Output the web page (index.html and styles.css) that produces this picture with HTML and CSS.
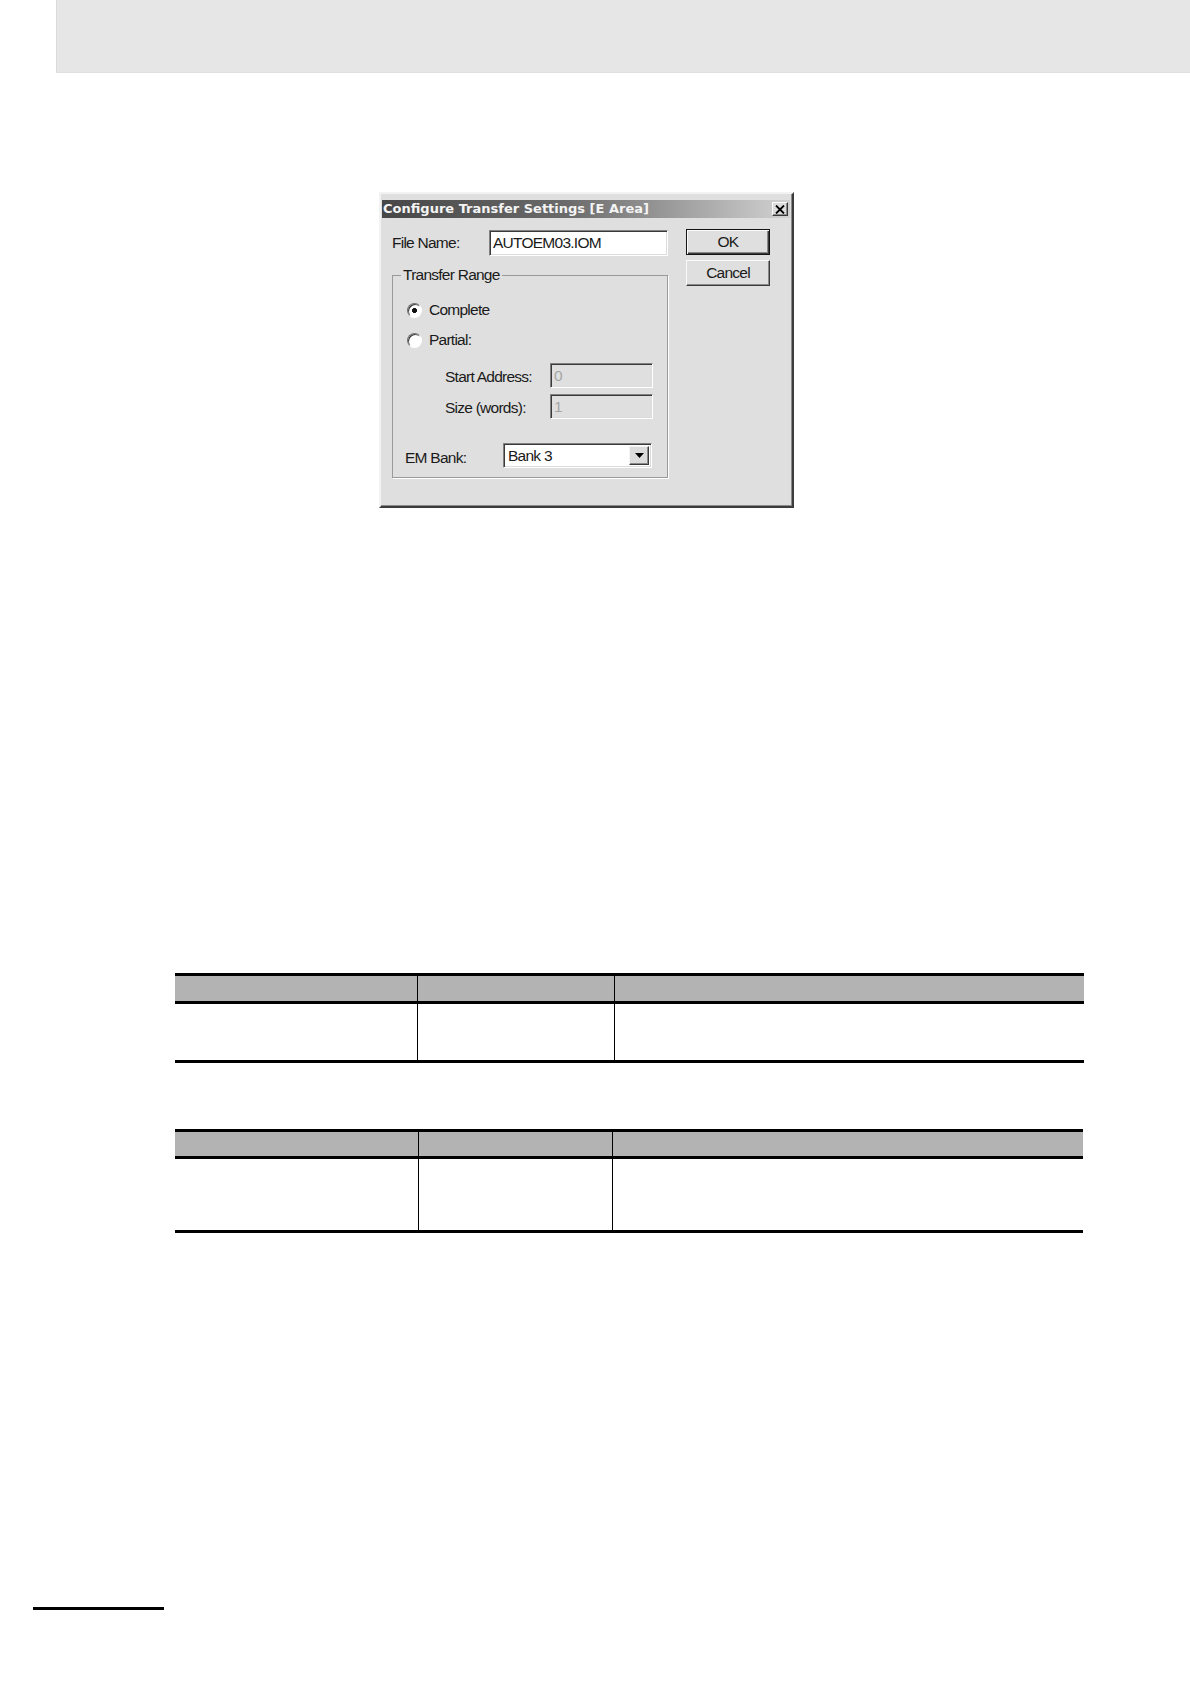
FILE: index.html
```html
<!DOCTYPE html>
<html>
<head>
<meta charset="utf-8">
<title>Configure Transfer Settings</title>
<link rel="stylesheet" href="styles.css">
</head>
<body>
<div class="topband"></div>

<div class="dialog-wrap">
  <div class="dialog">
    <div class="titlebar">
      <span class="title">Configure Transfer Settings [E Area]</span>
      <span class="close"><svg width="10" height="9" viewBox="0 0 10 9"><path d="M1 0.5 L9 8.5 M9 0.5 L1 8.5" stroke="#000" stroke-width="1.8" fill="none"/></svg></span>
    </div>
    <div class="dlg-body">
      <div class="left">
        <div class="file-row">
          <span class="file-lbl">File Name:</span>
          <div class="field white file-field">AUTOEM03.IOM</div>
        </div>
        <fieldset class="group">
          <legend>Transfer Range</legend>
          <div class="radio-row r1"><span class="radio checked"></span><span>Complete</span></div>
          <div class="radio-row r2"><span class="radio"></span><span>Partial:</span></div>
          <div class="sub-row s1"><span class="sub-lbl">Start Address:</span><div class="field disabled">0</div></div>
          <div class="sub-row s2"><span class="sub-lbl">Size (words):</span><div class="field disabled">1</div></div>
          <div class="bank-row">
            <span class="bank-lbl">EM Bank:</span>
            <div class="combo">
              <span class="combo-text">Bank 3</span>
              <span class="combo-btn"><svg width="9" height="5" viewBox="0 0 9 5"><path d="M0 0 L9 0 L4.5 5 Z" fill="#000"/></svg></span>
            </div>
          </div>
        </fieldset>
      </div>
      <div class="right">
        <div class="btn default">OK</div>
        <div class="btn cancel">Cancel</div>
      </div>
    </div>
  </div>
</div>

<div class="tbl t1">
  <div class="trow head"><div class="cell"></div><div class="cell"></div><div class="cell"></div></div>
  <div class="trow body"><div class="cell"></div><div class="cell"></div><div class="cell"></div></div>
</div>

<div class="tbl t2">
  <div class="trow head"><div class="cell"></div><div class="cell"></div><div class="cell"></div></div>
  <div class="trow body"><div class="cell"></div><div class="cell"></div><div class="cell"></div></div>
</div>

<div class="footline"></div>
</body>
</html>
```

FILE: styles.css
```css
* { box-sizing: border-box; }
html, body { margin: 0; padding: 0; background: #fff; }

.topband {
  margin-left: 56px;
  height: 73px;
  background: #e6e6e6;
  border-left: 1px solid #dadada;
  border-bottom: 1px solid #e0e0e0;
}

.dialog-wrap {
  padding-top: 119px;
  padding-left: 379px;
}

.dialog {
  width: 415px;
  height: 316px;
  background: #dfdfdf;
  border-style: solid;
  border-width: 2px;
  border-color: #f2f2f2 #3c3c3c #3c3c3c #f2f2f2;
  box-shadow: inset -1px -1px 0 #8a8a8a;
  padding: 6px 2px 0 1px;
  font-family: "Liberation Sans", Arial, sans-serif;
  font-size: 15.5px;
  letter-spacing: -0.75px;
  color: #1a1a1a;
}

.titlebar {
  height: 18px;
  display: flex;
  align-items: center;
  justify-content: space-between;
  background: linear-gradient(to right, #474747 0%, #6a6a6a 45%, #d2d2d2 100%);
  padding-left: 1px;
  padding-right: 2px;
}

.title {
  font-family: "DejaVu Sans", Verdana, sans-serif;
  font-weight: bold;
  font-size: 13px;
  letter-spacing: 0;
  color: #f4f4f4;
  line-height: 18px;
  white-space: nowrap;
}

.close {
  width: 16px;
  height: 14px;
  background: #dcdcdc;
  border-style: solid;
  border-width: 1px;
  border-color: #fafafa #3a3a3a #3a3a3a #fafafa;
  box-shadow: inset -1px -1px 0 #8a8a8a;
  display: flex;
  align-items: center;
  justify-content: center;
}

.dlg-body {
  display: flex;
  padding: 10px 0 0 10px;
  gap: 18px;
}

.left {
  width: 276px;
  display: flex;
  flex-direction: column;
}

.file-row {
  display: flex;
  align-items: center;
  height: 27px;
  margin-top: 1px;
}

.file-lbl {
  width: 97px;
}

.field {
  height: 100%;
  border-style: solid;
  border-width: 1px;
  border-color: #808080 #ffffff #ffffff #808080;
  box-shadow: inset 1px 1px 0 #3a3a3a, inset -1px -1px 0 #dcdcdc;
  display: flex;
  align-items: center;
  padding-left: 3px;
  white-space: nowrap;
}

.field.white {
  background: #fff;
}

.file-field {
  width: 179px;
  height: 26px;
}

.field.disabled {
  width: 103px;
  height: 25px;
  background: #dfdfdf;
  color: #a6a6a6;
  padding-left: 3px;
}

.group {
  margin: 10px 0 0 0;
  padding: 0 0 9px 8px;
  width: 276px;
  border: 1px solid #9a9a9a;
  box-shadow: 1px 1px 0 #ffffff;
  min-inline-size: 0;
}

.group legend {
  padding: 0 2px;
  line-height: 18px;
}

.radio-row {
  display: flex;
  align-items: center;
  height: 20px;
  margin-left: 6px;
  gap: 7px;
}

.r1 { margin-top: 16px; }
.r2 { margin-top: 10px; }

.radio {
  width: 15px;
  height: 15px;
  border-radius: 50%;
  border-style: solid;
  border-width: 1px;
  border-color: #707070 #ffffff #ffffff #707070;
  background: #fff;
  box-shadow: inset 1px 1px 0 #3a3a3a;
}

.radio.checked {
  background: radial-gradient(circle at 50% 50%, #111 0, #111 2.2px, #fff 2.8px);
}

.sub-row {
  display: flex;
  align-items: center;
  height: 25px;
  margin-left: 44px;
}

.s1 { margin-top: 13px; }
.s2 { margin-top: 6px; }

.sub-lbl {
  width: 105px;
  white-space: nowrap;
  padding-top: 2px;
}

.bank-row {
  display: flex;
  align-items: center;
  height: 25px;
  margin-top: 24px;
  margin-left: 4px;
}

.bank-lbl {
  width: 98px;
  padding-top: 5px;
}

.combo {
  width: 149px;
  height: 25px;
  background: #fff;
  border-style: solid;
  border-width: 1px;
  border-color: #808080 #ffffff #ffffff #808080;
  box-shadow: inset 1px 1px 0 #3a3a3a, inset -1px -1px 0 #dcdcdc;
  display: flex;
  align-items: center;
  justify-content: space-between;
  padding: 2px 2px 2px 4px;
}

.combo-btn {
  width: 20px;
  height: 100%;
  background: #dcdcdc;
  border-style: solid;
  border-width: 1px;
  border-color: #f4f4f4 #3a3a3a #3a3a3a #f4f4f4;
  box-shadow: inset -1px -1px 0 #8a8a8a;
  display: flex;
  align-items: center;
  justify-content: center;
}

.right {
  display: flex;
  flex-direction: column;
  gap: 5px;
  padding-top: 1px;
}

.btn {
  width: 84px;
  height: 26px;
  display: flex;
  align-items: center;
  justify-content: center;
  background: #dfdfdf;
  border-style: solid;
  border-width: 1px;
  border-color: #fafafa #3a3a3a #3a3a3a #fafafa;
  box-shadow: inset -1px -1px 0 #8a8a8a;
}

.btn.default {
  border: 1px solid #141414;
  box-shadow: inset 1px 1px 0 #fafafa, inset -1px -1px 0 #3a3a3a, inset -2px -2px 0 #8a8a8a;
}

.tbl {
  margin-left: 175px;
  border-top: 3px solid #000;
  border-bottom: 3px solid #000;
}

.trow {
  display: grid;
}

.trow .cell + .cell {
  border-left: 1px solid #000;
}

.head {
  background: #b3b3b3;
  border-bottom: 3px solid #000;
}

.t1 {
  width: 909px;
  margin-top: 465px;
}
.t1 .trow { grid-template-columns: 242px 197px 1fr; }
.t1 .head { height: 28px; }
.t1 .body { height: 56px; }

.t2 {
  width: 908px;
  margin-top: 66px;
}
.t2 .trow { grid-template-columns: 243px 194px 1fr; }
.t2 .head { height: 27px; }
.t2 .body { height: 71px; }

.footline {
  margin-top: 374px;
  margin-left: 33px;
  width: 131px;
  height: 3px;
  background: #000;
}
```
